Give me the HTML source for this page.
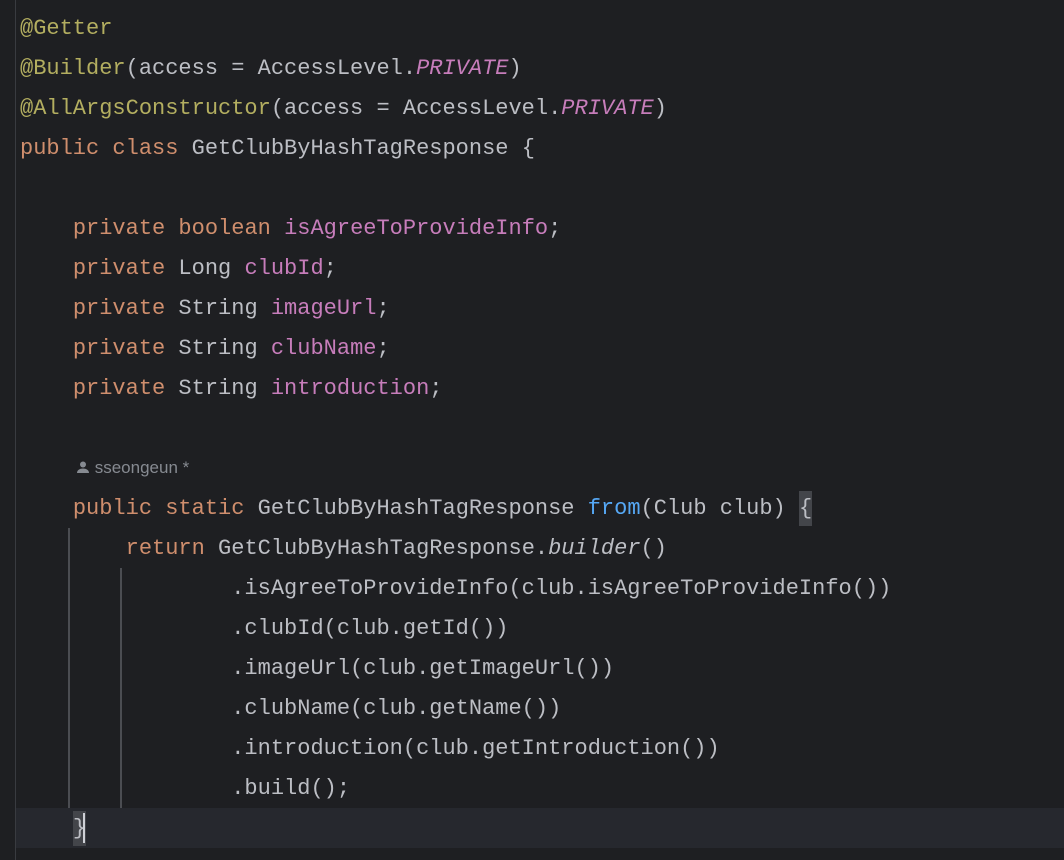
<!DOCTYPE html>
<html><head><meta charset="utf-8"><style>
html,body{margin:0;padding:0;background:#1e1f22;width:1064px;height:860px;overflow:hidden}
.ed{position:relative;width:1064px;height:860px;font-family:"Liberation Mono",monospace;font-size:22px;color:#bcbec4}
.gut{position:absolute;left:15px;top:0;width:1px;height:860px;background:#393b40}
.cur{position:absolute;left:16px;top:808px;width:1048px;height:40px;background:#26282e}
.ln{position:absolute;left:20px;height:40px;line-height:40px;white-space:pre;margin-top:1px}
.k{color:#cf8e6d}.a{color:#b3ae60}.f{color:#c77dbb}.i{font-style:italic}.m{color:#56a8f5}
.g{position:absolute;width:2px;background:#4b4d52}
.hint{position:absolute;left:76px;top:456px;font-family:"Liberation Sans",sans-serif;font-size:17px;color:#868a91;line-height:24px}
.br{background:#43454a;padding:5px 0}
.caret{display:inline-block;width:2px;height:30px;background:#ced0d6;vertical-align:middle;margin-left:-3px}
</style></head><body><div class="ed">
<div class="gut"></div>
<div class="cur"></div>
<div class="g" style="left:68px;top:528px;height:280px"></div>
<div class="g" style="left:120px;top:568px;height:240px"></div>
<div class="ln" style="top:8px"><span class="a">@Getter</span></div>
<div class="ln" style="top:48px"><span class="a">@Builder</span>(access = AccessLevel.<span class="f i">PRIVATE</span>)</div>
<div class="ln" style="top:88px"><span class="a">@AllArgsConstructor</span>(access = AccessLevel.<span class="f i">PRIVATE</span>)</div>
<div class="ln" style="top:128px"><span class="k">public class</span> GetClubByHashTagResponse {</div>
<div class="ln" style="top:208px">    <span class="k">private boolean</span> <span class="f">isAgreeToProvideInfo</span>;</div>
<div class="ln" style="top:248px">    <span class="k">private</span> Long <span class="f">clubId</span>;</div>
<div class="ln" style="top:288px">    <span class="k">private</span> String <span class="f">imageUrl</span>;</div>
<div class="ln" style="top:328px">    <span class="k">private</span> String <span class="f">clubName</span>;</div>
<div class="ln" style="top:368px">    <span class="k">private</span> String <span class="f">introduction</span>;</div>
<div class="hint"><svg width="14" height="14" viewBox="0 0 14 14" style="vertical-align:-1px"><circle cx="7" cy="4.5" r="3" fill="#868a91"/><path d="M1 13c0-3 3-4.5 6-4.5s6 1.5 6 4.5z" fill="#868a91"/></svg> sseongeun *</div>
<div class="ln" style="top:488px">    <span class="k">public static</span> GetClubByHashTagResponse <span class="m">from</span>(Club club) <span class="br">{</span></div>
<div class="ln" style="top:528px">        <span class="k">return</span> GetClubByHashTagResponse.<span class="i">builder</span>()</div>
<div class="ln" style="top:568px">                .isAgreeToProvideInfo(club.isAgreeToProvideInfo())</div>
<div class="ln" style="top:608px">                .clubId(club.getId())</div>
<div class="ln" style="top:648px">                .imageUrl(club.getImageUrl())</div>
<div class="ln" style="top:688px">                .clubName(club.getName())</div>
<div class="ln" style="top:728px">                .introduction(club.getIntroduction())</div>
<div class="ln" style="top:768px">                .build();</div>
<div class="ln" style="top:808px">    <span class="br">}</span><span class="caret"></span></div>
</div></body></html>
